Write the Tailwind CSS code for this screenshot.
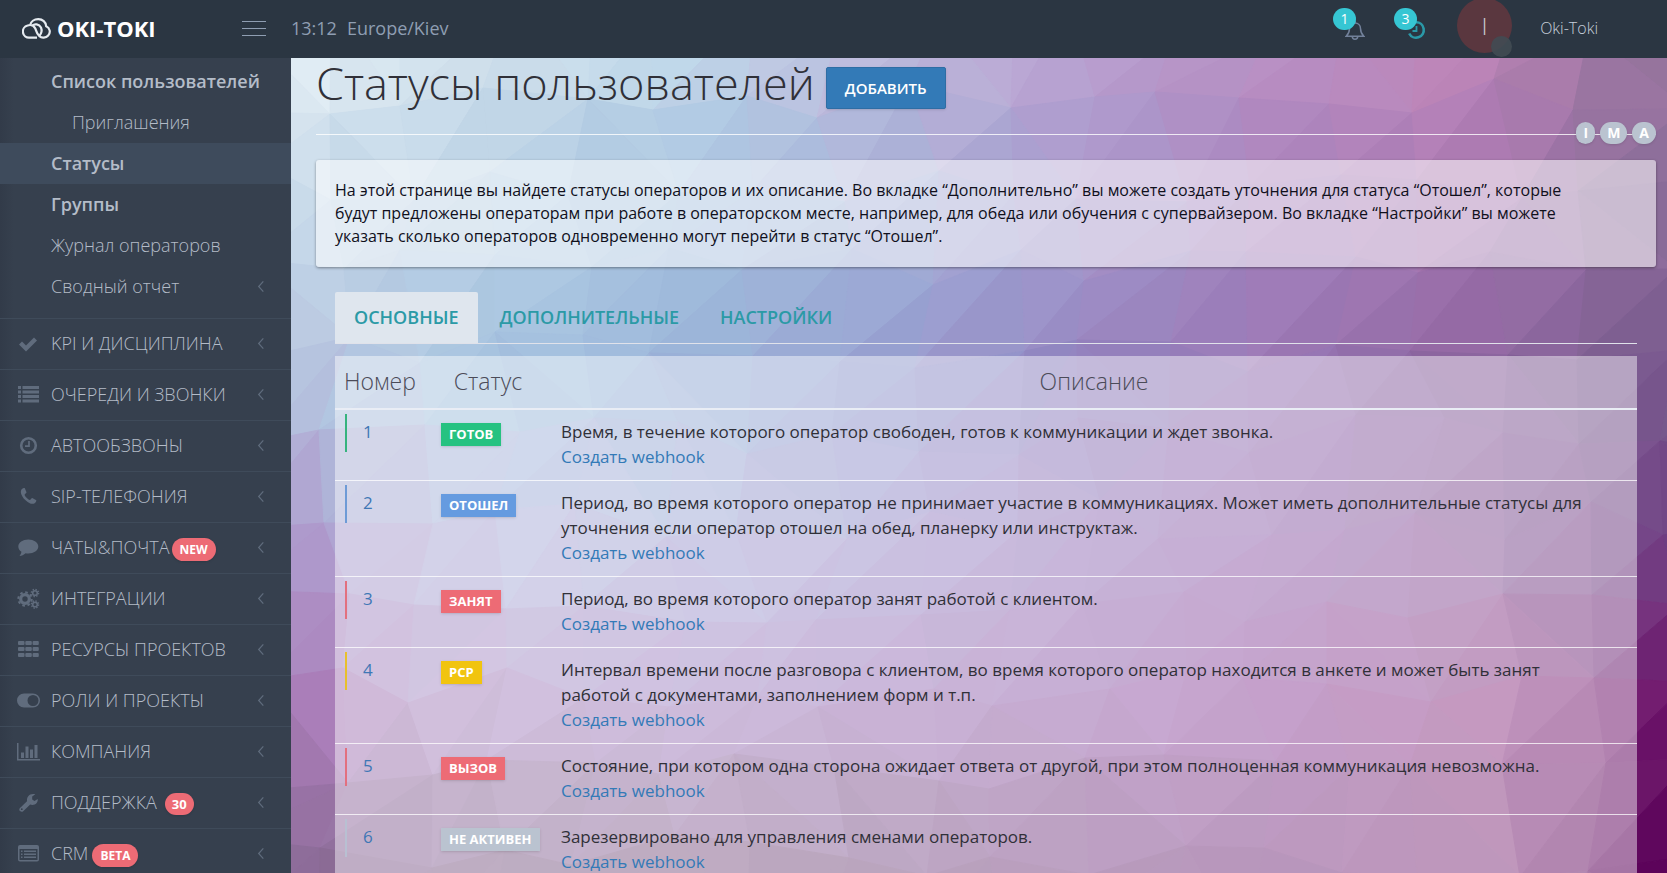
<!DOCTYPE html>
<html lang="ru">
<head>
<meta charset="utf-8">
<meta name="viewport" content="width=device-width, initial-scale=1">
<title>Статусы пользователей</title>
<script src="https://cdn.jsdelivr.net/npm/@tailwindcss/browser@4"></script>
</head>
<body class="flex h-screen flex-col overflow-hidden bg-[#36404e] font-['Open_Sans','Noto_Sans',sans-serif] text-[#303038]">

<svg class="hidden">
  <defs>
    <symbol id="chevron" viewBox="0 0 8 14"><path d="M6.500 1.500 1.500 7l5 5.500" fill="none" stroke="currentColor" stroke-width="1.300"/></symbol>
  </defs>
</svg>

<header class="flex h-[58px] shrink-0 items-center bg-[#2b3642] pb-[2px] text-[#8f9eb2]">
  <div class="flex w-[291px] shrink-0 items-center justify-between pl-[22px] pr-[25px]">
    <a href="#" class="flex items-center gap-[6px] text-white" aria-label="OKI-TOKI">
      <svg class="h-[21px] w-[29px]" viewBox="0 0 29 21" fill="none" stroke="#e6ebf0" stroke-width="2.200">
        <path d="M15 19.700H7.500A6.200 6.200 0 0 1 5.600 7.500C9 6.300 12 8 13.300 10.500 14.300 12.500 14.200 15 17.500 18.300 19.500 20.200 24 20 26.200 17.500A5.700 5.700 0 0 0 24.200 8.300C24 4 20.500 1.200 16.300 1.200 12 1.200 8.800 3.800 8.200 7"/>
        <path d="M10.500 7.500C12.500 5.500 17 6 19 9.500 20.200 12.500 19.500 15.500 17.300 18"/>
      </svg>
      <span class="text-[22px] font-bold leading-none">OKI-TOKI</span>
    </a>
    <button type="button" class="flex w-6 flex-col gap-[6px]" aria-label="Меню">
      <span class="h-px w-full bg-[#8f9eb2]"></span><span class="h-px w-full bg-[#8f9eb2]"></span><span class="h-px w-full bg-[#8f9eb2]"></span>
    </button>
  </div>
  <p class="flex gap-[10px] text-[18px]"><time>13:12</time><span>Europe/Kiev</span></p>
  <div class="ml-auto flex items-center pr-[69px]">
    <button type="button" class="relative mr-[41px] mt-[3px] h-[22px] w-[20px]" aria-label="Уведомления">
      <svg class="h-[22px] w-[20px]" viewBox="0 0 20 22" fill="none" stroke="#72819a" stroke-width="1.500"><path d="M10 2v2M1.200 17.200C3.500 15 4.500 13 4.500 9.500 4.500 6 7 4 10 4s5.500 2 5.500 5.500c0 3.500 1 5.500 3.300 7.700zM7.300 17.500c0 3.500 5.400 3.500 5.400 0"/></svg>
      <span class="absolute -left-[12px] -top-[11px] flex h-[22px] w-[23px] items-center justify-center rounded-full bg-[#36c6d3] text-[14px] text-white">1</span>
    </button>
    <button type="button" class="relative mr-[31px] mt-[3px] h-[20px] w-[20px]" aria-label="Активность">
      <svg class="h-[20px] w-[20px]" viewBox="0 0 20 20" fill="none" stroke="#2a99a8"><path stroke-width="2.600" d="M10 2.300A7.700 7.700 0 1 1 3.200 13.500"/><path stroke-width="1.800" d="M10.500 6v5H6.500"/></svg>
      <span class="absolute -left-[12px] -top-[12px] flex h-[22px] w-[23px] items-center justify-center rounded-full bg-[#36c6d3] text-[14px] text-white">3</span>
    </button>
    <a href="#" class="flex items-center gap-[28px] text-[16px] font-light text-[#c6cfda]">
      <span class="relative -mt-[5px] flex size-[55px] items-center justify-center rounded-full bg-[#5a373f] text-[24px] text-[#c9cdd2]">I<span class="absolute -bottom-[4px] right-0 size-[21px] rounded-full bg-[#414b53]/90"></span></span>
      <span>Oki-Toki</span>
    </a>
  </div>
</header>

<div class="flex min-h-0 flex-1">
  <nav class="w-[291px] shrink-0 overflow-hidden bg-linear-to-r from-[#323b49] to-[#36404e] to-[14px] text-[18px] font-light text-[#b4bcc8]">
    <ul class="pb-[11px] pt-[3px] leading-[41px]">
      <li><a href="#" class="block pl-[51px] font-semibold">Список пользователей</a></li>
      <li><a href="#" class="block pl-[72px]">Приглашения</a></li>
      <li><a href="#" class="block bg-[#3e4b5c] pl-[51px] font-semibold">Статусы</a></li>
      <li><a href="#" class="block pl-[51px] font-semibold">Группы</a></li>
      <li><a href="#" class="block pl-[51px]">Журнал операторов</a></li>
      <li><a href="#" class="flex items-center justify-between pl-[51px] pr-[26px]">Сводный отчет<svg class="h-[13px] w-[8px] text-[#606c7d]"><use href="#chevron"/></svg></a></li>
    </ul>
    <ul class="leading-[49px]">
      <li class="border-t border-[#3f4b5a] pb-px"><a href="#" class="flex items-center pl-[16px] pr-[26px]">
        <svg class="mr-[11px] h-[22px] w-[24px] text-[#606c7d]" viewBox="0 0 24 22" fill="currentColor"><path d="m3 11.500 3-3 4 4L18 4.500l3 3-11 11z"/></svg>
        <span class="flex-1">KPI И ДИСЦИПЛИНА</span><svg class="h-[13px] w-[8px] text-[#606c7d]"><use href="#chevron"/></svg></a></li>
      <li class="border-t border-[#3f4b5a] pb-px"><a href="#" class="flex items-center pl-[16px] pr-[26px]">
        <svg class="mr-[11px] h-[22px] w-[24px] text-[#606c7d]" viewBox="0 0 24 22" fill="currentColor"><path d="M2 2h3v3H2zM2 6.500h3v3H2zM2 11h3v3H2zM2 15.500h3v3H2zM6.500 2h16.500v3H6.500zM6.500 6.500h16.500v3H6.500zM6.500 11h16.500v3H6.500zM6.500 15.500h16.500v3H6.500z"/></svg>
        <span class="flex-1">ОЧЕРЕДИ И ЗВОНКИ</span><svg class="h-[13px] w-[8px] text-[#606c7d]"><use href="#chevron"/></svg></a></li>
      <li class="border-t border-[#3f4b5a] pb-px"><a href="#" class="flex items-center pl-[16px] pr-[26px]">
        <svg class="mr-[11px] h-[22px] w-[24px] text-[#606c7d]" viewBox="0 0 24 22" fill="none" stroke="currentColor"><circle cx="12.500" cy="10.500" r="7.300" stroke-width="2.600"/><path d="M13 6v5.200H9" stroke-width="1.700"/></svg>
        <span class="flex-1">АВТООБЗВОНЫ</span><svg class="h-[13px] w-[8px] text-[#606c7d]"><use href="#chevron"/></svg></a></li>
      <li class="border-t border-[#3f4b5a] pb-px"><a href="#" class="flex items-center pl-[16px] pr-[26px]">
        <svg class="mr-[11px] h-[22px] w-[24px] text-[#606c7d]" viewBox="0 0 24 22" fill="currentColor"><path d="M5.500 3.500C6.300 2.300 8 1.800 8.700 2L10.500 6.200C10.500 7 8.700 8 8.600 8.700 8.800 10.300 12 13.500 13.800 14 14.500 14 15.500 12 16.300 12L20.300 14.200C20.500 15 19.800 16.500 18.700 17.200 16.500 18.500 14 17.500 12 16.200 8.500 14 6.300 11 5.300 8.300 4.700 6.500 4.700 4.900 5.500 3.500z"/></svg>
        <span class="flex-1">SIP-ТЕЛЕФОНИЯ</span><svg class="h-[13px] w-[8px] text-[#606c7d]"><use href="#chevron"/></svg></a></li>
      <li class="border-t border-[#3f4b5a] pb-px"><a href="#" class="flex items-center pl-[16px] pr-[26px]">
        <svg class="mr-[11px] h-[22px] w-[24px] text-[#606c7d]" viewBox="0 0 24 22" fill="currentColor"><path d="M12.300 2.500c5.500 0 10 3 10 7s-4.500 7-10 7c-1 0-1.900-.1-2.700-.3C8 17.700 5.500 18.800 3.500 19c1-1 1.700-2.500 1.900-4.200C3.500 13.500 2.300 11.600 2.300 9.500c0-4 4.500-7 10-7z"/></svg>
        <span class="flex flex-1 items-center gap-[2px]">ЧАТЫ&amp;ПОЧТА<span class="mt-[3px] rounded-full bg-[#ed6b75] px-2 text-[12px] font-bold leading-[23px] text-white shadow">NEW</span></span><svg class="h-[13px] w-[8px] text-[#606c7d]"><use href="#chevron"/></svg></a></li>
      <li class="border-t border-[#3f4b5a] pb-px"><a href="#" class="flex items-center pl-[16px] pr-[26px]">
        <svg class="mr-[11px] h-[22px] w-[24px] text-[#606c7d]" viewBox="0 0 24 22" fill="none" stroke="currentColor"><circle cx="9" cy="11" r="4.300" stroke-width="3.200"/><circle cx="9" cy="11" r="6.700" stroke-width="2" stroke-dasharray="2.630 2.630"/><circle cx="19" cy="5" r="2.300" stroke-width="1.600"/><circle cx="19" cy="5" r="3.600" stroke-width="1.400" stroke-dasharray="1.410 1.410"/><circle cx="19" cy="16.500" r="2.300" stroke-width="1.600"/><circle cx="19" cy="16.500" r="3.600" stroke-width="1.400" stroke-dasharray="1.410 1.410"/></svg>
        <span class="flex-1">ИНТЕГРАЦИИ</span><svg class="h-[13px] w-[8px] text-[#606c7d]"><use href="#chevron"/></svg></a></li>
      <li class="border-t border-[#3f4b5a] pb-px"><a href="#" class="flex items-center pl-[16px] pr-[26px]">
        <svg class="mr-[11px] h-[22px] w-[24px] text-[#606c7d]" viewBox="0 0 24 22" fill="currentColor"><path d="M3 2h4.500q1 0 1 1v2q0 1-1 1H3q-1 0-1-1V3q0-1 1-1zM10.300 2h4.500q1 0 1 1v2q0 1-1 1h-4.500q-1 0-1-1V3q0-1 1-1zM17.600 2h4.200q1 0 1 1v2q0 1-1 1h-4.200q-1 0-1-1V3q0-1 1-1zM3 8h4.500q1 0 1 1v2q0 1-1 1H3q-1 0-1-1V9q0-1 1-1zM10.300 8h4.500q1 0 1 1v2q0 1-1 1h-4.500q-1 0-1-1V9q0-1 1-1zM17.600 8h4.200q1 0 1 1v2q0 1-1 1h-4.200q-1 0-1-1V9q0-1 1-1zM3 14h4.500q1 0 1 1v2q0 1-1 1H3q-1 0-1-1v-2q0-1 1-1zM10.300 14h4.500q1 0 1 1v2q0 1-1 1h-4.500q-1 0-1-1v-2q0-1 1-1zM17.600 14h4.200q1 0 1 1v2q0 1-1 1h-4.200q-1 0-1-1v-2q0-1 1-1z"/></svg>
        <span class="flex-1">РЕСУРСЫ ПРОЕКТОВ</span><svg class="h-[13px] w-[8px] text-[#606c7d]"><use href="#chevron"/></svg></a></li>
      <li class="border-t border-[#3f4b5a] pb-px"><a href="#" class="flex items-center pl-[16px] pr-[26px]">
        <svg class="mr-[11px] h-[22px] w-[24px] text-[#606c7d]" viewBox="0 0 24 22" fill="currentColor"><path fill-rule="evenodd" d="M8 3.500h9a7 7 0 0 1 0 14H8a7 7 0 0 1 0-14zM17 5a5.500 5.500 0 1 0 0 11 5.500 5.500 0 0 0 0-11z"/></svg>
        <span class="flex-1">РОЛИ И ПРОЕКТЫ</span><svg class="h-[13px] w-[8px] text-[#606c7d]"><use href="#chevron"/></svg></a></li>
      <li class="border-t border-[#3f4b5a] pb-px"><a href="#" class="flex items-center pl-[16px] pr-[26px]">
        <svg class="mr-[11px] h-[22px] w-[24px] text-[#606c7d]" viewBox="0 0 24 22" fill="currentColor"><path d="M1 2h1.500v16H24v1.500H1zM5 11.500h3V17H5zM9.500 5.500h3V17h-3zM14 8.500h3V17h-3zM18.500 4h3v13h-3z"/></svg>
        <span class="flex-1">КОМПАНИЯ</span><svg class="h-[13px] w-[8px] text-[#606c7d]"><use href="#chevron"/></svg></a></li>
      <li class="border-t border-[#3f4b5a] pb-px"><a href="#" class="flex items-center pl-[16px] pr-[26px]">
        <svg class="mr-[11px] h-[22px] w-[24px] text-[#606c7d]" viewBox="0 0 24 22" fill="currentColor"><path fill-rule="evenodd" d="M19.300 2.300 16.200 4.500v3l2.300 1.400 3.200-1.900c.5 3.200-2 5.900-5.300 5.900-.8 0-1.500-.1-2.200-.4L7.200 19.200c-1 1-2.300.8-3.200-.1-.9-1-1-2.300 0-3.200l7-6.600C10.500 5 13.500 1 19.300 2.300zM5.800 16.300a.9.900 0 1 0 0 1.800.9.900 0 0 0 0-1.800z"/></svg>
        <span class="flex flex-1 items-center gap-2">ПОДДЕРЖКА<span class="mt-[3px] rounded-full bg-[#ed6b75] px-[7px] text-[13px] font-bold leading-[22px] text-white shadow">30</span></span><svg class="h-[13px] w-[8px] text-[#606c7d]"><use href="#chevron"/></svg></a></li>
      <li class="border-t border-[#3f4b5a] pb-px"><a href="#" class="flex items-center pl-[16px] pr-[26px]">
        <svg class="mr-[11px] h-[22px] w-[24px] text-[#606c7d]" viewBox="0 0 24 22" fill="currentColor"><path fill-rule="evenodd" d="M4 2h17q2 0 2 2v12.500q0 2-2 2H4q-2 0-2-2V4q0-2 2-2zM3.500 6v10.500q0 .5.500.5h17q.5 0 .500-.5V6zM5 7.500h1.500V9H5zM8 7.500h12V9H8zM5 10.500h1.500V12H5zM8 10.500h12V12H8zM5 13.500h1.500V15H5zM8 13.500h12V15H8z"/></svg>
        <span class="flex flex-1 items-center gap-1">CRM<span class="mt-[3px] rounded-full bg-[#ed6b75] px-2 text-[12px] font-bold leading-[23px] text-white shadow">BETA</span></span><svg class="h-[13px] w-[8px] text-[#606c7d]"><use href="#chevron"/></svg></a></li>
    </ul>
  </nav>

  <main class="relative min-w-0 flex-1 overflow-hidden bg-[#b9a5d0]">
    <svg id="mosaic" class="absolute inset-0 h-full w-full" viewBox="0 0 1376 815" preserveAspectRatio="none" aria-hidden="true"></svg>
    <div class="relative pl-[25px] pr-[11px]">
      <div class="flex h-[77px] items-start border-b border-white/80">
        <h1 class="text-[45px] font-light leading-[50px]">Статусы пользователей</h1>
        <button type="button" class="ml-[11px] mt-[9px] h-[42px] rounded-[2px] border border-[#2e6da4] bg-[#337ab7] px-[18px] text-[15px] font-semibold text-white shadow">ДОБАВИТЬ</button>
      </div>
      <div class="relative -mt-[13px] flex justify-end gap-[5px] text-[14px] font-bold leading-[22px] text-white">
        <button type="button" class="rounded-full bg-[#bac3d0] px-[7px] shadow">I</button>
        <button type="button" class="rounded-full bg-[#bac3d0] px-[7px] shadow">M</button>
        <button type="button" class="rounded-full bg-[#bac3d0] px-[7px] shadow">A</button>
      </div>
      <section class="mt-4 rounded-[3px] bg-white/55 py-[19px] pl-[19px] pr-[60px] text-[16px] leading-[23px] text-[#10101c] shadow-[0_1px_3px_rgba(0,0,0,0.4)]">
        На этой странице вы найдете статусы операторов и их описание. Во вкладке “Дополнительно” вы можете создать уточнения для статуса “Отошел”, которые будут предложены операторам при работе в операторском месте, например, для обеда или обучения с супервайзером. Во вкладке “Настройки” вы можете указать сколько операторов одновременно могут перейти в статус “Отошел”.
      </section>
      <div class="mt-[25px] px-[19px]">
        <div role="tablist" class="flex border-b border-[#e0e2ea] text-[18px] font-semibold text-[#2b9aa6]">
          <button type="button" role="tab" aria-selected="true" class="h-[51px] rounded-t-[2px] bg-[#dfe6ee] px-[19px]">ОСНОВНЫЕ</button>
          <button type="button" role="tab" aria-selected="false" class="ml-[3px] h-[51px] px-[19px]">ДОПОЛНИТЕЛЬНЫЕ</button>
          <button type="button" role="tab" aria-selected="false" class="ml-[3px] h-[51px] px-[19px]">НАСТРОЙКИ</button>
        </div>
        <table class="mt-3 w-full table-fixed bg-white/45 text-[17px] leading-[25px]">
          <colgroup><col class="w-[90px]"><col class="w-[126px]"><col></colgroup>
          <thead>
            <tr class="h-[53px] border-b-2 border-[#e9edf5] text-[23px] text-[#4b4b58]"><th class="pb-[2px] font-light">Номер</th><th class="pb-[2px] font-light">Статус</th><th class="pb-[2px] font-light">Описание</th></tr>
          </thead>
          <tbody class="align-top">
            <tr class="border-b border-white/75"><td class="px-[10px] pt-1 text-[#3f77b5]"><div class="h-[38px] border-l-2 border-[#36b37e] pl-4 pt-[5px]">1</div></td><td class="py-[13px] pl-4"><span class="block w-fit bg-[#26c281] px-2 text-[13px] font-bold leading-[23px] text-white shadow">ГОТОВ</span></td><td class="pb-[11px] pl-[10px] pr-[36px] pt-[9px]">Время, в течение которого оператор свободен, готов к коммуникации и ждет звонка.<br><a href="#" class="text-[#337ab7]">Создать webhook</a></td></tr>
            <tr class="border-b border-white/75"><td class="px-[10px] pt-1 text-[#3f77b5]"><div class="h-[38px] border-l-2 border-[#6e9bd6] pl-4 pt-[5px]">2</div></td><td class="py-[13px] pl-4"><span class="block w-fit bg-[#659be0] px-2 text-[13px] font-bold leading-[23px] text-white shadow">ОТОШЕЛ</span></td><td class="pb-[11px] pl-[10px] pr-[36px] pt-[9px]">Период, во время которого оператор не принимает участие в коммуникациях. Может иметь дополнительные статусы для уточнения если оператор отошел на обед, планерку или инструктаж.<br><a href="#" class="text-[#337ab7]">Создать webhook</a></td></tr>
            <tr class="border-b border-white/75"><td class="px-[10px] pt-1 text-[#3f77b5]"><div class="h-[38px] border-l-2 border-[#e2707f] pl-4 pt-[5px]">3</div></td><td class="py-[13px] pl-4"><span class="block w-fit bg-[#ed6b75] px-2 text-[13px] font-bold leading-[23px] text-white shadow">ЗАНЯТ</span></td><td class="pb-[11px] pl-[10px] pr-[36px] pt-[9px]">Период, во время которого оператор занят работой с клиентом.<br><a href="#" class="text-[#337ab7]">Создать webhook</a></td></tr>
            <tr class="border-b border-white/75"><td class="px-[10px] pt-1 text-[#3f77b5]"><div class="h-[38px] border-l-2 border-[#e8c02c] pl-4 pt-[5px]">4</div></td><td class="py-[13px] pl-4"><span class="block w-fit bg-[#f1c40f] px-2 text-[13px] font-bold leading-[23px] text-white shadow">РСР</span></td><td class="pb-[11px] pl-[10px] pr-[36px] pt-[9px]">Интервал времени после разговора с клиентом, во время которого оператор находится в анкете и может быть занят работой с документами, заполнением форм и т.п.<br><a href="#" class="text-[#337ab7]">Создать webhook</a></td></tr>
            <tr class="border-b border-white/75"><td class="px-[10px] pt-1 text-[#3f77b5]"><div class="h-[38px] border-l-2 border-[#e2707f] pl-4 pt-[5px]">5</div></td><td class="py-[13px] pl-4"><span class="block w-fit bg-[#ed6b75] px-2 text-[13px] font-bold leading-[23px] text-white shadow">ВЫЗОВ</span></td><td class="pb-[11px] pl-[10px] pr-[36px] pt-[9px]">Состояние, при котором одна сторона ожидает ответа от другой, при этом полноценная коммуникация невозможна.<br><a href="#" class="text-[#337ab7]">Создать webhook</a></td></tr>
            <tr class="border-b border-white/75"><td class="px-[10px] pt-1 text-[#3f77b5]"><div class="h-[38px] border-l-2 border-[#b8c0d2] pl-4 pt-[5px]">6</div></td><td class="py-[13px] pl-4"><span class="block w-fit bg-[#bac3d0] px-2 text-[13px] font-bold leading-[23px] text-white shadow">НЕ АКТИВЕН</span></td><td class="pb-[11px] pl-[10px] pr-[36px] pt-[9px]">Зарезервировано для управления сменами операторов.<br><a href="#" class="text-[#337ab7]">Создать webhook</a></td></tr>
          </tbody>
        </table>
      </div>
    </div>
  </main>
</div>

<script>
// Low-poly backdrop: a jittered triangle mesh, tinted from a coarse grid of colours.
const W = 1376, H = 815;
const palette = [
  ['e0ecf3', 'cfe0ec', 'c0d8ea', 'bdb9db', 'b8a0d0', 'b88fc3', 'bd85b8', '92729a'],
  ['c8daea', 'b4cde3', 'a3c0de', 'a2b0d8', 'a498cc', 'a680bb', 'a575b0', '866a96'],
  ['b6c4df', 'a6c4e0', '9cb5da', '949ed0', '9283bf', '9676b3', '8c659f', '76588c'],
  ['ae9acc', 'b0b2da', 'aaacd8', 'a094cc', '9a7cbc', '9668ae', '8c5e9c', '6f3f83'],
  ['ab7db8', 'ac8cc2', 'a888c4', 'a078b8', '9a68ae', '9654a2', '98488f', '6a1268'],
  ['8c6b98', '886a90', '8a688e', '805a88', '804c88', '7e4084', '843f80', '5a0058']
].map(r => r.map(h => [0, 2, 4].map(i => parseInt(h.substr(i, 2), 16))));
const rnd = (i, j, k) => { const s = Math.sin(i * 127.1 + j * 311.7 + k * 74.7) * 43758.5453; return s - Math.floor(s); };
function tint(x, y, shade) {
  const gx = Math.min(Math.max(x / W, 0), .999) * 7, gy = Math.min(Math.max(y / H, 0), .999) * 5;
  const i = Math.floor(gx), j = Math.floor(gy), u = gx - i, v = gy - j;
  const c = [0, 1, 2].map(k => Math.round(
    (palette[j][i][k] * (1 - u) + palette[j][i + 1][k] * u) * (1 - v) +
    (palette[j + 1][i][k] * (1 - u) + palette[j + 1][i + 1][k] * u) * v + shade));
  return `rgb(${c})`;
}
const cell = 84;
const point = (i, j) => [Math.round((i - .5 + (rnd(i, j, 1) - .5) * .5) * cell), Math.round((j - .5 + (rnd(i, j, 2) - .5) * .5) * cell)];
let shapes = '';
for (let j = -1; j < 12; j++) for (let i = -1; i < 19; i++) {
  const a = point(i, j), b = point(i + 1, j), c = point(i + 1, j + 1), d = point(i, j + 1);
  const pair = rnd(i, j, 3) > .2 ? [[a, b, d], [b, c, d]] : [[a, b, c], [a, c, d]];
  pair.forEach((t, n) => {
    const fill = tint((t[0][0] + t[1][0] + t[2][0]) / 3, (t[0][1] + t[1][1] + t[2][1]) / 3, (rnd(i, j, 4 + n) - .5) * 3);
    shapes += `<polygon points="${t.join(' ')}" fill="${fill}" stroke="${fill}" stroke-width="1"/>`;
  });
}
document.getElementById('mosaic').innerHTML = shapes;
</script>
</body>
</html>
